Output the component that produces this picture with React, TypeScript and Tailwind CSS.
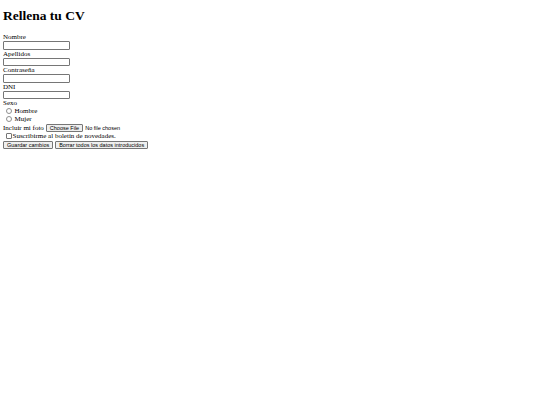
export default function App() {
  const fields = ['Nombre', 'Apellidos', 'Contraseña', 'DNI'];

  return (
    <div className="min-h-screen bg-white text-black font-['Liberation_Serif',serif] text-[7px] leading-[8px]">
      <div className="px-[3px]">
        <h1 className="text-[13.5px] leading-[16px] font-bold pt-[8px] pb-[9px]">Rellena tu CV</h1>
        <form>
          {fields.map(f => (
            <div key={f}>
              <div className="h-[8px]">{f}</div>
              <div className="h-[8.5px] w-[67px] border border-[#767676] rounded-[1px] bg-white" />
            </div>
          ))}
          <div className="h-[8px]">Sexo</div>
          {['Hombre', 'Mujer'].map(s => (
            <div key={s} className="h-[8px] flex items-center">
              <span className="ml-[3px] mr-[3px] w-[5.5px] h-[5.5px] rounded-full border border-[#8f8f8f] bg-white" />
              <span>{s}</span>
            </div>
          ))}
          <div className="h-[9px] flex items-center">
            <span>Incluir mi foto</span>
            <span className="ml-[2px] h-[8px] px-[3px] flex items-center border border-[#767676] rounded-[1px] bg-[#efefef] font-['Liberation_Sans',sans-serif] text-[5.5px] leading-[6px]">Choose File</span>
            <span className="ml-[2px] font-['Liberation_Sans',sans-serif] text-[5.5px] leading-[6px]">No file chosen</span>
          </div>
          <div className="h-[8px] flex items-center">
            <span className="ml-[3px] mr-[1px] w-[5.5px] h-[5.5px] rounded-[1px] border border-[#767676] bg-white" />
            <span>Suscribirme al boletín de novedades.</span>
          </div>
          <div className="flex gap-[2px] mt-[1px] font-['Liberation_Sans',sans-serif] text-[5.5px] leading-[6px]">
            <span className="h-[8px] px-[3px] flex items-center border border-[#767676] rounded-[1px] bg-[#efefef]">Guardar cambios</span>
            <span className="h-[8px] px-[3px] flex items-center border border-[#767676] rounded-[1px] bg-[#efefef]">Borrar todos los datos introducidos</span>
          </div>
        </form>
      </div>
    </div>
  );
}
